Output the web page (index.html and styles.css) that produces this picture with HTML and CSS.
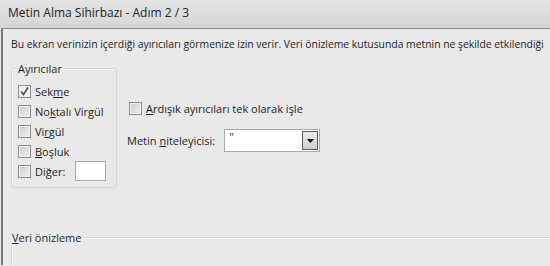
FILE: index.html
```html
<!DOCTYPE html>
<html lang="tr">
<head>
  <meta charset="UTF-8">
  <title>Metin Alma Sihirbazı - Adım 2 / 3</title>
  <link rel="stylesheet" href="styles.css">
</head>
<body>

  <div class="titlebar">Metin Alma Sihirbazı - Adım 2 / 3</div>

  <div class="frame">
    <p class="intro">Bu ekran verinizin içerdiği ayırıcıları görmenize izin verir. Veri önizleme kutusunda metnin ne şekilde etkilendiği</p>

    <div class="options">
      <fieldset class="group separators">
        <legend>Ayırıcılar</legend>
        <label class="check"><span class="box checked"><svg width="11" height="11" viewBox="0 0 11 11"><path d="M2 5.5 L4.5 8.5 L9 1.5" fill="none" stroke="#4a5a6a" stroke-width="1.8"/></svg></span>Sek<u>m</u>e</label>
        <label class="check"><span class="box"></span>No<u>k</u>talı Virgül</label>
        <label class="check"><span class="box"></span>Vi<u>r</u>gül</label>
        <label class="check"><span class="box"></span><u>B</u>oşluk</label>
        <label class="check other"><span class="box"></span>Di<u>ğ</u>er:<span class="textbox"></span></label>
      </fieldset>

      <div class="side">
        <label class="check"><span class="box"></span><u>A</u>rdışık ayırıcıları tek olarak işle</label>
        <div class="qualifier">
          <span>Metin <u>n</u>iteleyicisi:</span>
          <div class="combo">
            <span class="value">"</span>
            <span class="arrow"><svg width="7" height="4" viewBox="0 0 7 4"><path d="M0 0 H7 L3.5 4 Z" fill="#000"/></svg></span>
          </div>
        </div>
      </div>
    </div>

    <fieldset class="group preview">
      <legend><u>V</u>eri önizleme</legend>
    </fieldset>
  </div>

</body>
</html>
```

FILE: styles.css
```css
body {
  margin: 0;
  background: #e9e9e9;
  font-family: "Open Sans", "Noto Sans", sans-serif;
  font-size: 11px;
  color: #1e1e1e;
  overflow: hidden;
}

.titlebar {
  height: 28px;
  line-height: 26px;
  padding-left: 8px;
  font-size: 12px;
  color: #222;
  background: linear-gradient(#e4e4e4, #d6d6d6);
  box-sizing: border-box;
}

.frame {
  margin-left: 1px;
  border-left: 2px solid #7a7a7a;
  border-top: 1px solid #8a8a8a;
  height: 237px;
  box-sizing: border-box;
  padding-left: 8px;
  overflow: hidden;
  background: #e9e9e9;
}

.intro {
  margin: 0;
  padding-top: 8px;
  white-space: nowrap;
  line-height: 15px;
  font-size: 10.4px;
  letter-spacing: -0.02px;
}

.options {
  display: flex;
  margin-top: 10px;
}

.group {
  margin: 0;
  border: 1px solid #d4d4d4;
  border-radius: 3px;
  box-shadow: inset 1px 1px 0 #f6f6f6;
}

.group legend {
  padding: 0 2px;
  margin-left: -2px;
  line-height: 13px;
}

.separators {
  width: 106px;
  height: 126px;
  box-sizing: border-box;
  padding: 6px 0 0 6px;
}

.check {
  display: flex;
  align-items: center;
  height: 20px;
}

.box {
  width: 11px;
  height: 11px;
  border: 1px solid #8e8e8e;
  background: linear-gradient(135deg, #cbcbcb, #f2f2f2);
  box-shadow: inset 0 0 0 1px #f2f2f2;
  margin-right: 4px;
  display: flex;
  align-items: center;
  justify-content: center;
}

.box.checked {
  background: #f0f0f0;
}

.other .textbox {
  width: 31px;
  height: 20px;
  margin-left: 10px;
  background: #fff;
  border: 1px solid #aaa;
  box-sizing: border-box;
}

.side {
  margin-left: 12px;
  padding-top: 36px;
}

.qualifier {
  display: flex;
  align-items: center;
  margin-top: 11px;
  margin-left: -2px;
}

.combo {
  display: flex;
  margin-left: 9px;
  width: 96px;
  height: 23px;
  box-sizing: border-box;
  border: 1px solid #a9a9a9;
  background: #fff;
}

.combo .value {
  flex: 1;
  padding: 0 0 0 4px;
  line-height: 14px;
}

.combo .arrow {
  width: 16px;
  margin: 1px;
  box-sizing: border-box;
  border: 1px solid #5a5a5a;
  background: linear-gradient(#ececec, #cfcfcf);
  display: flex;
  align-items: center;
  justify-content: center;
}

.preview {
  margin-top: 43px;
  height: 40px;
  padding: 0;
  border-right: none;
  border-bottom: none;
  border-radius: 3px 0 0 0;
}
```
